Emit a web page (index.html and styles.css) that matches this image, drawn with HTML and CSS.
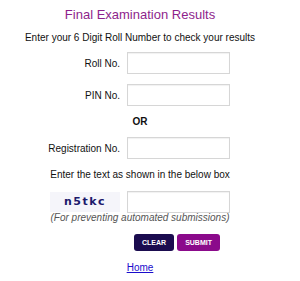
FILE: index.html
```html
<!DOCTYPE html>
<html lang="en">
<head>
    <meta charset="UTF-8">
    <meta name="viewport" content="width=device-width, initial-scale=1.0">
    <title>Final Examination Results</title>
    <link rel="stylesheet" href="styles.css">
</head>
<body>
    <div class="result-form">
        <h1 class="title">Final Examination Results</h1>
        <p class="intro">Enter your 6 Digit Roll Number to check your results</p>

        <div class="field-row first">
            <label for="rollNo">Roll No.</label>
            <input type="text" id="rollNo">
        </div>
        <div class="field-row">
            <label for="pinNo">PIN No.</label>
            <input type="text" id="pinNo">
        </div>

        <div class="or-text">OR</div>

        <div class="field-row reg">
            <label for="regNo">Registration No.</label>
            <input type="text" id="regNo">
        </div>

        <p class="intro hint">Enter the text as shown in the below box</p>

        <div class="field-row captcha-row">
            <div class="captcha-cell"><span class="captcha">n5tkc</span></div>
            <input type="text" id="captchaInput">
        </div>
        <p class="note">(For preventing automated submissions)</p>

        <div class="buttons">
            <button type="reset" class="btn btn-clear">CLEAR</button>
            <button type="submit" class="btn btn-submit">SUBMIT</button>
        </div>

        <a href="#" class="home-link">Home</a>
    </div>
</body>
</html>
```

FILE: styles.css
```css
body {
    margin: 0;
    font-family: "Liberation Sans", Arial, sans-serif;
    background: #ffffff;
    color: #111111;
}

.result-form {
    width: 280px;
    display: flex;
    flex-direction: column;
    align-items: center;
}

.title {
    margin: 6px 0 0 0;
    font-size: 13px;
    font-weight: normal;
    color: #8e1f8c;
    line-height: 17px;
}

.intro {
    margin: 8px 0 0 0;
    font-size: 10px;
    line-height: 14px;
}

.field-row {
    align-self: flex-start;
    display: grid;
    grid-template-columns: 120px 103px;
    column-gap: 7px;
    align-items: center;
    margin-top: 10px;
}

.field-row.first {
    margin-top: 7px;
}

.field-row.reg {
    margin-top: 8px;
}

.field-row.captcha-row {
    margin-top: 9px;
}

.hint {
    margin-top: 9px;
}

.field-row label {
    text-align: right;
    font-size: 10px;
}

.field-row input {
    box-sizing: border-box;
    width: 103px;
    height: 22px;
    margin: 0;
    border: 1px solid #d6d6d6;
    box-shadow: inset 0 1px 1px rgba(0, 0, 0, 0.06);
    background: #ffffff;
}

.or-text {
    margin-top: 9px;
    font-size: 10px;
    font-weight: bold;
    line-height: 14px;
}

.captcha-cell {
    display: flex;
    justify-content: flex-end;
}

.captcha {
    display: inline-block;
    width: 70px;
    text-align: center;
    background: #f5f5fa;
    color: #1c1a6b;
    font-family: "DejaVu Sans", sans-serif;
    font-weight: bold;
    font-size: 11px;
    letter-spacing: 1.5px;
    line-height: 20px;
}

.note {
    margin: -1px 0 0 0;
    font-size: 10px;
    font-style: italic;
    color: #555555;
    line-height: 12px;
}

.buttons {
    align-self: flex-start;
    display: flex;
    gap: 3px;
    margin: 10px 0 0 134px;
}

.btn {
    border: none;
    border-radius: 3px;
    color: #ffffff;
    font-family: "Liberation Sans", Arial, sans-serif;
    font-size: 7px;
    font-weight: bold;
    height: 17px;
    padding: 0 8px;
}

.btn-clear {
    background: #1b0c4f;
}

.btn-submit {
    background: #8b0a8b;
}

.home-link {
    margin-top: 10px;
    font-size: 10px;
    line-height: 14px;
    color: #1a0dcc;
}
```
